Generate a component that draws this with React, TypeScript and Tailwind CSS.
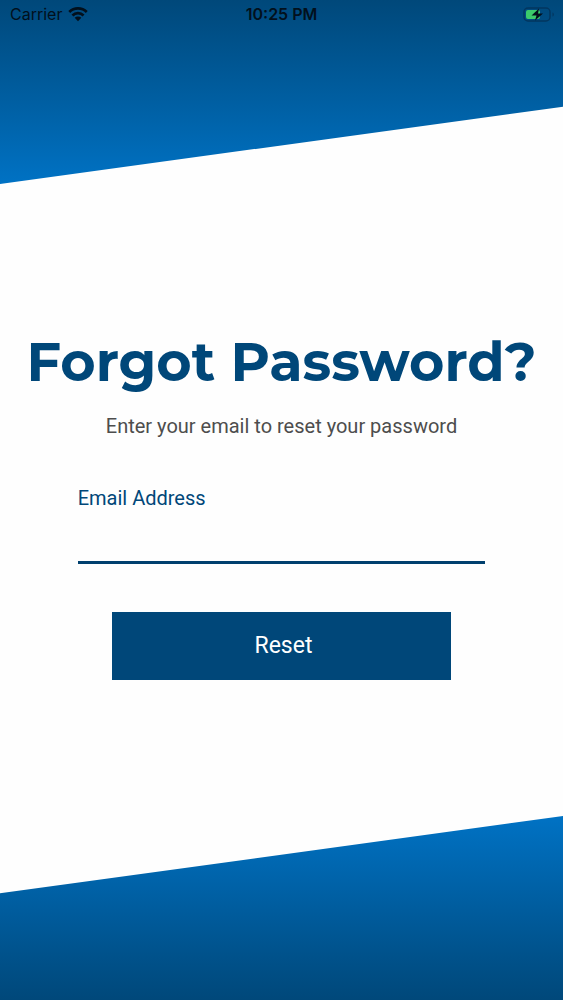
import { useState } from "react";

function StatusBar() {
  return (
    <div className="relative flex h-7 items-center justify-between pr-2 pl-2.5 font-[Inter,'Liberation_Sans',sans-serif] text-base text-[#02101c]">
      <div className="flex items-center gap-1.5">
        <span>Carrier</span>
        <svg width="20" height="16" viewBox="0 0 20 16" aria-hidden="true">
          <path d="M.3 5A13.600 13.600 0 0 1 19.700 5L17.800 7A11 11 0 0 0 2.200 7Z" fill="currentColor" />
          <path d="M3.500 8.400A9.200 9.200 0 0 1 16.500 8.400L14.600 10.400A6.600 6.600 0 0 0 5.400 10.400Z" fill="currentColor" />
          <path d="M10 15.200 6.700 11.800A4.700 4.700 0 0 1 13.300 11.800Z" fill="currentColor" />
        </svg>
      </div>
      <svg width="32" height="15" viewBox="0 0 32 15" aria-hidden="true">
        <rect x="1" y="1" width="26" height="13" rx="4" fill="none" stroke="#02365f" strokeWidth="1.5" />
        <rect x="3" y="3" width="14" height="9" rx="2" fill="#3bcb6b" />
        <path d="M29.500 5.500v4c1-.4 1.300-1.200 1.300-2s-.3-1.600-1.300-2Z" fill="#02365f" />
        <path d="M16 1.500 8.500 8.500h5L12 13.500 20 6.500h-5Z" fill="#02101c" />
      </svg>
      <span className="absolute inset-x-0 text-center font-semibold">10:25 PM</span>
    </div>
  );
}

export default function App() {
  const [email, setEmail] = useState("");
  return (
    <main className="flex min-h-screen flex-col bg-[#fefefe] font-[Roboto,sans-serif]">
      <header className="h-46 bg-linear-to-b from-[#00487a] to-[#0072c4] [clip-path:polygon(0_0,100%_0,100%_58%,0_100%)]">
        <StatusBar />
      </header>
      <form
        className="flex grow flex-col items-center justify-center pt-2"
        onSubmit={(e) => e.preventDefault()}
      >
        <h1 className="whitespace-nowrap font-[Montserrat,Inter,sans-serif] text-[54px] leading-[68px] font-bold text-[#004779]">
          Forgot Password?
        </h1>
        <p className="mt-4 text-xl leading-7 text-[#4d4d4d]">Enter your email to reset your password</p>
        <div className="mt-11 flex w-[72.4%] flex-col">
          <label htmlFor="email" className="text-xl leading-7 text-[#004779]">
            Email Address
          </label>
          <input
            id="email"
            type="email"
            value={email}
            onChange={(e) => setEmail(e.target.value)}
            className="h-13 w-full border-b-3 border-[#00406e] bg-transparent text-xl outline-none"
          />
        </div>
        <button type="submit" className="mt-12 h-17 w-[60.2%] bg-[#004779] pl-1 text-[23px] text-white">
          Reset
        </button>
      </form>
      <footer className="h-46 bg-linear-to-b from-[#0072c4] to-[#00487a] [clip-path:polygon(0_42%,100%_0,100%_100%,0_100%)]" />
    </main>
  );
}
